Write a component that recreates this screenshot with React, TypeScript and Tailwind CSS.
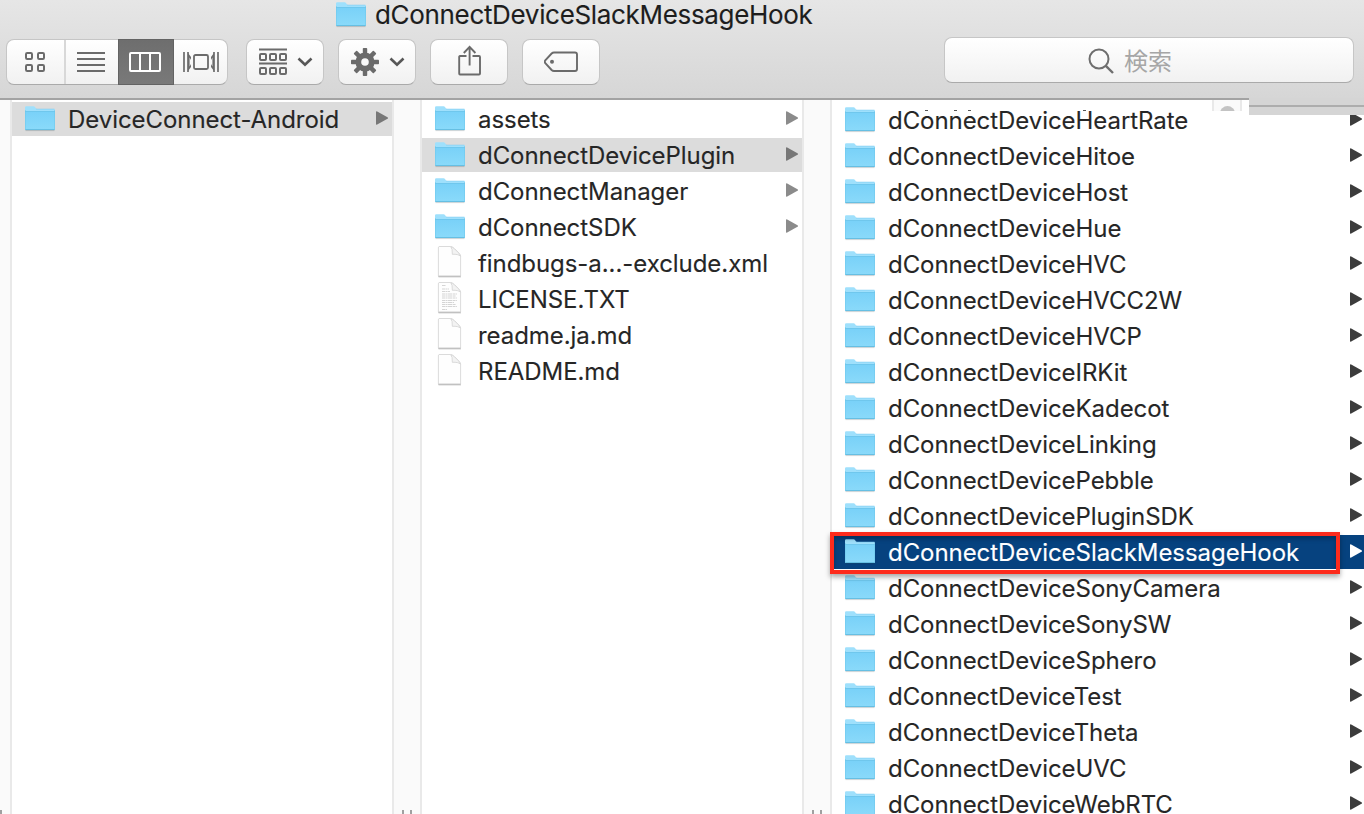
import React from "react";

type Item = { name: string; kind?: "folder" | "file" | "text" };

const PLUGINS = [
  "HeartRate", "Hitoe", "Host", "Hue", "HVC", "HVCC2W", "HVCP", "IRKit", "Kadecot", "Linking",
  "Pebble", "PluginSDK", "SlackMessageHook", "SonyCamera", "SonySW", "Sphero", "Test", "Theta", "UVC", "WebRTC",
];

const MIDDLE: Item[] = [
  { name: "assets" },
  { name: "dConnectDevicePlugin" },
  { name: "dConnectManager" },
  { name: "dConnectSDK" },
  { name: "findbugs-a...-exclude.xml", kind: "file" },
  { name: "LICENSE.TXT", kind: "text" },
  { name: "readme.ja.md", kind: "file" },
  { name: "README.md", kind: "file" },
];

function Folder() {
  return (
    <svg width="30" height="26" viewBox="0 0 30 26" className="block shrink-0">
      <defs>
        <linearGradient id="fold" x1="0" y1="0" x2="0" y2="1">
          <stop offset="0" stopColor="#79d1f8" />
          <stop offset="1" stopColor="#8adafa" />
        </linearGradient>
      </defs>
      <path d="M.5 24.6h29" stroke="#000" strokeOpacity=".16" />
      <path d="M0 1.5Q0 .2 1.2 .2H8.6Q9.5.2 10 1L11 2.6Q11.3 3 12 3H29Q30 3 30 4V23.5H0Z" fill="#9fe0fc" />
      <path d="M11 3.1H29.5" stroke="#7fcdf0" strokeWidth=".6" />
      <path d="M0 5.5H30V23.2Q30 24 29 24H1Q0 24 0 23.2Z" fill="url(#fold)" />
      <path d="M0 5.5H30" stroke="#68c3ea" strokeWidth=".8" />
      <path d="M.3 23.6H29.7" stroke="#5eb9de" strokeWidth=".9" />
      <path d="M.3 4V23.5M29.7 4V23.5" stroke="#6cc6ea" strokeWidth=".6" />
    </svg>
  );
}

function Doc({ text }: { text?: boolean }) {
  return (
    <svg width="26" height="32" viewBox="0 0 26 32" className="block shrink-0">
      <path d="M1.5 31.2H24" stroke="#000" strokeOpacity=".12" />
      <path
        d="M2 .5H13.5Q15.5.8 17.5 2.8L21.5 6.8Q23.5 8.8 23.6 10.5V30H1.4V1.1Z"
        fill="#fefefe"
        stroke="#d2d2d2"
        strokeWidth=".8"
        strokeLinejoin="round"
      />
      <path d="M1.3 30.4H23.8" stroke="#b8b8b8" strokeWidth=".9" />
      <path d="M13.8.8Q15.6 2.6 15.3 8.3Q21.5 8 23.4 10.2Q23.2 8.6 21.5 6.8L17.5 2.8Q15.6.9 13.8.8Z" fill="#f3f3f3" stroke="#cdcdcd" strokeWidth=".7" />
      {text && (
        <path
          d="M5 3.5H9M5 7H12M5 9.5H13M5 12H20M5 14H19M5 16H20M5 18.5H20M5 20.5H17M5 22.5H19M5 24.5H20M5 27.5H10"
          stroke="#d0d0d0"
          strokeWidth=".9"
          strokeDasharray="3 .5 2 .5 4 .6"
        />
      )}
    </svg>
  );
}

function Arrow({ className }: { className: string }) {
  return (
    <svg width="13" height="14" viewBox="0 0 13 14" className={`block shrink-0 ${className}`}>
      <path d="M0 1Q0-.2 1.2.4L11.5 6.2Q12.6 7 11.5 7.8L1.2 13.6Q0 14.2 0 13Z" fill="currentColor" />
    </svg>
  );
}

function Gutter({ first, grip }: { first?: boolean; grip?: boolean }) {
  return (
    <div
      className={`flex shrink-0 items-end justify-center border-r-2 border-[#e9e9e9] bg-[#fafafa] ${
        first ? "w-3" : "w-[30px] border-l-2"
      }`}
    >
      {grip && <div className="h-1 w-[10px] border-x-2 border-[#a0a0a0]" />}
      {first && <div className="mr-auto h-1 w-[2px] bg-[#a0a0a0]" />}
    </div>
  );
}

const BUTTON =
  "flex h-[46px] shrink-0 items-center rounded-[8px] border border-[#c6c6c6] border-b-[#aaaaaa] bg-linear-to-b from-white to-[#f1f1f1]";

function Chevron() {
  return (
    <svg width="16" height="10" viewBox="0 0 16 10" fill="none" className="block">
      <path d="M1.5 1.5L8 7.8L14.5 1.5" stroke="#575757" strokeWidth="2.6" />
    </svg>
  );
}

function Toolbar() {
  return (
    <div className="flex h-[48px] items-start pl-[6px] pr-[10px]">
      <div className={`${BUTTON} mt-[2px] w-[222px] items-stretch`}>
        <div className="flex w-[59px] items-center justify-center border-r-2 border-[#d8d8d8] pr-[2px]">
          <svg width="22" height="22" viewBox="0 0 22 22" fill="none" stroke="#6b6b6b" strokeWidth="2">
            <rect x="2" y="2" width="6" height="6" rx="1.2" />
            <rect x="14" y="2" width="6" height="6" rx="1.2" />
            <rect x="2" y="14" width="6" height="6" rx="1.2" />
            <rect x="14" y="14" width="6" height="6" rx="1.2" />
          </svg>
        </div>
        <div className="flex w-[52px] items-center justify-center pr-[2px]">
          <svg width="28" height="22" viewBox="0 0 28 22" stroke="#6b6b6b" strokeWidth="2">
            <path d="M0 2H28M0 8H28M0 14H28M0 20H28" />
          </svg>
        </div>
        <div className="-my-px flex w-14 items-center justify-center border border-[#636363] bg-linear-to-b from-[#6e6e6e] to-[#797979] pr-[2px]">
          <svg width="32" height="20" viewBox="0 0 32 20" fill="none" stroke="#fff" strokeWidth="2">
            <rect x="1" y="1" width="30" height="18" rx="1" />
            <path d="M11 1V19M21 1V19" />
          </svg>
        </div>
        <div className="flex w-[53px] items-center justify-center">
          <svg width="36" height="20" viewBox="0 0 36 20" fill="none" stroke="#6b6b6b" strokeWidth="1.8">
            <path d="M1 0V20M35 0V20M5 0V20M31 0V20" strokeWidth="1.7" />
            <path d="M5 1L8 5V8L6.6 5.5V14.5L8 12V15L5 19ZM31 1L28 5V8L29.4 5.5V14.5L28 12V15L31 19Z" fill="#6b6b6b" stroke="none" />
            <rect x="11" y="3" width="14" height="14" rx="1.5" />
          </svg>
        </div>
      </div>

      <div className={`${BUTTON} ml-[18px] mt-[2px] w-[78px] gap-[10px] pl-[12px]`}>
        <svg width="28" height="28" viewBox="0 0 28 28" fill="none" stroke="#6b6b6b" strokeWidth="2">
          <path d="M0 1.5H28M0 15.5H28" />
          <rect x="1" y="6" width="6" height="6" rx="1" />
          <rect x="11" y="6" width="6" height="6" rx="1" />
          <rect x="21" y="6" width="6" height="6" rx="1" />
          <rect x="1" y="20" width="6" height="6" rx="1" />
          <rect x="11" y="20" width="6" height="6" rx="1" />
          <rect x="21" y="20" width="6" height="6" rx="1" />
        </svg>
        <Chevron />
      </div>

      <div className={`${BUTTON} ml-[14px] mt-[2px] w-[78px] gap-[10px] pl-[12px]`}>
        <svg width="28" height="28" viewBox="-14 -14 28 28" className="block">
          <g fill="#6b6b6b">
            <rect x="-2.2" y="-14" width="4.4" height="28" rx=".8" />
            <rect x="-2.2" y="-14" width="4.4" height="28" rx=".8" transform="rotate(45)" />
            <rect x="-2.2" y="-14" width="4.4" height="28" rx=".8" transform="rotate(90)" />
            <rect x="-2.2" y="-14" width="4.4" height="28" rx=".8" transform="rotate(135)" />
            <circle r="9.6" />
          </g>
          <circle r="3.8" fill="#f8f8f8" />
        </svg>
        <Chevron />
      </div>

      <div className={`${BUTTON} ml-[14px] mt-[2px] w-[78px] justify-center`}>
        <svg width="24" height="32" viewBox="0 0 24 32" fill="none" stroke="#6b6b6b" strokeWidth="1.9" className="-mt-[2px] ml-px">
          <path d="M8.5 11H2Q1.2 11 1.2 12V28.5Q1.2 29.5 2 29.5H21Q22 29.5 22 28.5V12Q22 11 21 11H14.5" />
          <path d="M11.6 20.5V2M5.8 8L11.6 1.8L17.4 8" />
        </svg>
      </div>

      <div className={`${BUTTON} ml-[14px] mt-[2px] w-[78px] justify-center`}>
        <svg width="34" height="22" viewBox="0 0 34 22" fill="none" stroke="#6b6b6b" strokeWidth="1.9">
          <path d="M10 1.5H31Q33 1.5 33 3.5V18Q33 20 31 20H10Q8.7 20 7.6 19L1.3 12.2Q.3 10.8 1.3 9.3L7.6 2.5Q8.7 1.5 10 1.5Z" />
          <circle cx="8" cy="10.8" r="2" fill="#6b6b6b" stroke="none" />
        </svg>
      </div>

      <div className={`${BUTTON} ml-auto w-[410px] pl-[143px]`}>
        <svg width="26" height="26" viewBox="0 0 26 26" fill="none" stroke="#6e6e6e" strokeWidth="2" className="mt-[1px]">
          <circle cx="11" cy="11" r="9.5" />
          <path d="M17.6 17.6L25 25" strokeWidth="2.4" />
        </svg>
        <span className="ml-[10px] font-['Noto_Sans_CJK_JP',sans-serif] text-[24px] leading-[44px] text-[#a6a6a6]">検索</span>
      </div>
    </div>
  );
}

const LABEL =
  "ml-[13px] whitespace-nowrap pt-px text-[24px] leading-[34px] tracking-[-0.06px] [-webkit-text-stroke:0.12px_currentColor]";

export default function App() {
  return (
    <div className="relative flex h-[814px] w-[1364px] flex-col overflow-hidden bg-white font-['Inter',sans-serif] text-[#262626]">
      <header className="h-[100px] shrink-0 border-b-2 border-[#a3a3a3] bg-linear-to-b from-[#e6e6e6] to-[#d6d6d6]">
        <div className="flex h-[37px] items-start pl-[336px] pt-[2px]">
          <Folder />
          <h1 className="-mt-[4px] ml-[9px] whitespace-nowrap text-[26px] leading-[34px] tracking-[-0.33px] text-[#1d1d1d] [-webkit-text-stroke:0.12px_currentColor]">
            dConnectDeviceSlackMessageHook
          </h1>
        </div>
        <Toolbar />
      </header>

      <main className="flex min-h-0 flex-1">
        <Gutter first />
        <section className="w-[380px] shrink-0 pt-[2px]">
          <div className="flex h-[34px] items-start bg-[#dcdcdc] pl-[13px]">
            <div className="pt-1"><Folder /></div>
            <span className={LABEL}>DeviceConnect-Android</span>
            <Arrow className="ml-auto mr-[3px] mt-[9px] text-[#777777]" />
          </div>
        </section>

        <Gutter grip />
        <section className="flex w-[380px] shrink-0 flex-col gap-[2px] pt-[2px]">
          {MIDDLE.map((item, i) => (
            <div key={item.name} className={`flex h-[34px] items-start pl-[13px] ${i === 1 ? "bg-[#dcdcdc]" : ""}`}>
              <div className={item.kind ? "w-[30px] pl-[2px]" : "w-[30px] pt-1"}>
                {item.kind ? <Doc text={item.kind === "text"} /> : <Folder />}
              </div>
              <span className={LABEL}>{item.name}</span>
              {!item.kind && (
                <Arrow className={`ml-auto mr-[3px] mt-[9px] ${i === 1 ? "text-[#777777]" : "text-[#8b8b8b]"}`} />
              )}
            </div>
          ))}
        </section>

        <Gutter grip />
        <section className="flex min-w-0 flex-1 flex-col gap-[2px] overflow-hidden pt-[3px]">
          {PLUGINS.map((name) => {
            const selected = name === "SlackMessageHook";
            return (
              <div key={name} className={`flex h-[34px] shrink-0 items-start pl-[13px] ${selected ? "bg-[#06427f] text-white" : ""}`}>
                <div className="pt-1"><Folder /></div>
                <span className={LABEL}>dConnectDevice{name}</span>
                <Arrow className={`ml-auto mr-[1px] mt-[9px] ${selected ? "text-white" : "text-[#3c3c3c]"}`} />
              </div>
            );
          })}
        </section>
      </main>

      <div className="absolute left-[830px] top-[532px] h-[42px] w-[510px] border-4 border-[#fd2b1c] shadow-[0_3px_5px_rgba(0,0,0,0.35),inset_0_3px_4px_rgba(0,0,0,0.25)]">
        <div className="mt-[33px] h-px bg-white/80" />
      </div>
      <div className="absolute left-[925px] top-[110px] h-px w-[3px] bg-[#555555]" />
      <div className="absolute left-[954px] top-[110px] h-px w-[3px] bg-[#555555]" />
      <div className="absolute left-[968px] top-[110px] h-px w-[3px] bg-[#555555]" />
      <div className="absolute left-[1083px] top-[110px] h-px w-[3px] bg-[#555555]" />
      <div className="absolute left-[1212px] top-[100px] flex h-[11px] w-[30px] justify-center overflow-hidden border-x-2 border-[#e9e9e9] bg-[#fafafa] pt-[6px]">
        <div className="size-[15px] shrink-0 rounded-full bg-[#c3c3c3]" />
      </div>
      <div className="absolute left-[1249px] top-[98px] h-[17px] w-[115px] bg-[#d5d5d5] pt-[7px]">
        <div className="h-[2px] bg-[#adadad]" />
      </div>
    </div>
  );
}
